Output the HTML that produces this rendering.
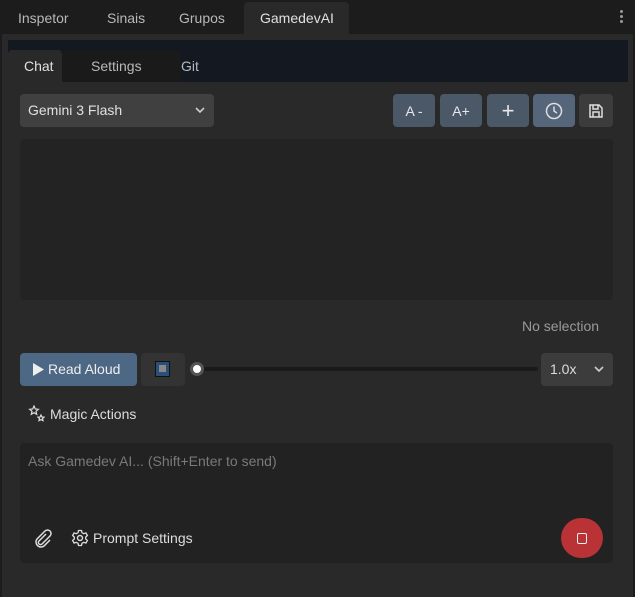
<!DOCTYPE html><html><head><style>
body{margin:0;width:635px;height:597px;background:#1c1c1c;font-family:"Liberation Sans",sans-serif;font-size:14px;color:#d0d0d0;position:relative;overflow:hidden}
div{position:absolute;box-sizing:border-box;white-space:nowrap}
.t{top:10px;color:#b8b8b8}
.btn{top:94px;height:33px;border-radius:4px;background:#4a5868;color:#e8e8e8;display:flex;align-items:center;justify-content:center}
</style></head><body>
<div class="t" style="left:18px">Inspetor</div>
<div class="t" style="left:107px">Sinais</div>
<div class="t" style="left:179px">Grupos</div>
<div style="left:244px;top:2px;width:105px;height:33px;background:#292929;border-radius:4px 4px 0 0;color:#e0e0e0;padding:8px 0 0 16px">GamedevAI</div>
<div style="left:620px;top:10px;width:3px;height:3px;background:#999;border-radius:2px;box-shadow:0 5px #999,0 10px #999"></div>
<div style="left:2px;top:34px;width:631px;height:563px;background:#292929"></div>
<div style="left:8px;top:40px;width:620px;height:42px;background:#141821"></div>
<div style="left:62px;top:50px;width:118px;height:32px;background:#1a1a1a;border-radius:4px 4px 0 0"></div>
<div style="left:8px;top:50px;width:54px;height:32px;background:#292929;border-radius:4px 4px 0 0;color:#e0e0e0;padding:8px 0 0 16px">Chat</div>
<div style="left:91px;top:58px;color:#b8b8b8">Settings</div>
<div style="left:181px;top:58px;color:#b8b8b8">Git</div>
<div style="left:20px;top:94px;width:194px;height:33px;background:#404040;border-radius:4px;padding:8px 0 0 8px;color:#e0e0e0">Gemini 3 Flash
<svg style="position:absolute;right:9px;top:12px" width="10" height="8"><path d="M1 2l4 4 4-4" stroke="#ccc" stroke-width="1.6" fill="none"/></svg></div>
<div class="btn" style="left:393px;width:42px">A -</div>
<div class="btn" style="left:440px;width:42px">A+</div>
<div class="btn" style="left:487px;width:42px;font-size:22px">+</div>
<div class="btn" style="left:533px;width:42px;background:#56667a"><svg width="18" height="18"><circle cx="9" cy="9" r="7.5" stroke="#ddd" stroke-width="1.5" fill="none"/><path d="M9 4.5V9l3 2" stroke="#ddd" stroke-width="1.5" fill="none"/></svg></div>
<div class="btn" style="left:579px;width:34px;background:#3c3c3c"><svg width="16" height="16"><path d="M2 2h9l3 3v9H2z M5 2v4h5V2 M5 14v-5h6v5" stroke="#ddd" stroke-width="1.5" fill="none"/></svg></div>
<div style="left:20px;top:139px;width:593px;height:161px;background:#232323;border-radius:4px"></div>
<div style="left:522px;top:318px;color:#9a9a9a">No selection</div>
<div style="left:20px;top:353px;width:117px;height:33px;background:#4d6884;border-radius:4px;color:#eee;padding:8px 0 0 13px"><svg style="position:absolute;left:13px;top:10px" width="11" height="13"><path d="M0 0L11 6.5 0 13z" fill="#eee"/></svg><span style="margin-left:15px">Read Aloud</span></div>
<div style="left:141px;top:353px;width:44px;height:33px;background:#333;border-radius:4px"></div>
<div style="left:155px;top:361px;width:15px;height:16px;background:#2a4f78;border:1px solid #111"></div>
<div style="left:159px;top:365px;width:7px;height:7px;background:#888"></div>
<div style="left:197px;top:367px;width:341px;height:4px;background:#1a1a1a;border-radius:2px"></div>
<div style="left:190px;top:362px;width:14px;height:14px;border-radius:7px;background:#fff;border:3px solid #555"></div>
<div style="left:541px;top:353px;width:72px;height:33px;background:#3c3c3c;border-radius:4px;padding:8px 0 0 9px;color:#ddd">1.0x<svg style="position:absolute;right:9px;top:12px" width="10" height="8"><path d="M1 2l4 4 4-4" stroke="#ccc" stroke-width="1.6" fill="none"/></svg></div>
<div style="left:28px;top:405px"><svg width="18" height="18"><path d="M6 1l1.3 3 3 .3-2.3 2 .7 3-2.7-1.6-2.7 1.6.7-3-2.3-2 3-.3z M13 10l1 2 2 .2-1.5 1.4.5 2-2-1-2 1 .5-2-1.5-1.4 2-.2z" stroke="#ddd" stroke-width="1.2" fill="none"/></svg></div>
<div style="left:50px;top:406px;color:#ddd">Magic Actions</div>
<div style="left:20px;top:443px;width:593px;height:120px;background:#222;border-radius:4px"></div>
<div style="left:28px;top:453px;color:#7a7a7a">Ask Gamedev AI... (Shift+Enter to send)</div>
<div style="left:32px;top:528px"><svg width="20" height="20"><path d="M14 6l-7 7a2 2 0 0 0 3 3l8-8a3.5 3.5 0 0 0-5-5L5 11a5 5 0 0 0 7 7l6-6" stroke="#ddd" stroke-width="1.5" fill="none"/></svg></div>
<div style="left:71px;top:529px"><svg width="18" height="18"><circle cx="9" cy="9" r="2.5" stroke="#ddd" stroke-width="1.4" fill="none"/><path d="M7.5 1.5h3l.5 2.2 1.8 1 2.1-.8 1.5 2.6-1.7 1.5v2l1.7 1.5-1.5 2.6-2.1-.8-1.8 1-.5 2.2h-3l-.5-2.2-1.8-1-2.1.8-1.5-2.6 1.7-1.5v-2L1.6 6.5l1.5-2.6 2.1.8 1.8-1z" stroke="#ddd" stroke-width="1.3" fill="none"/></svg></div>
<div style="left:93px;top:530px;color:#ddd">Prompt Settings</div>
<div style="left:561px;top:518px;width:42px;height:40px;border-radius:21px;background:#b83236"></div>
<div style="left:577px;top:533px;width:10px;height:11px;border:1.5px solid #eee;border-radius:2px"></div>
</body></html>
